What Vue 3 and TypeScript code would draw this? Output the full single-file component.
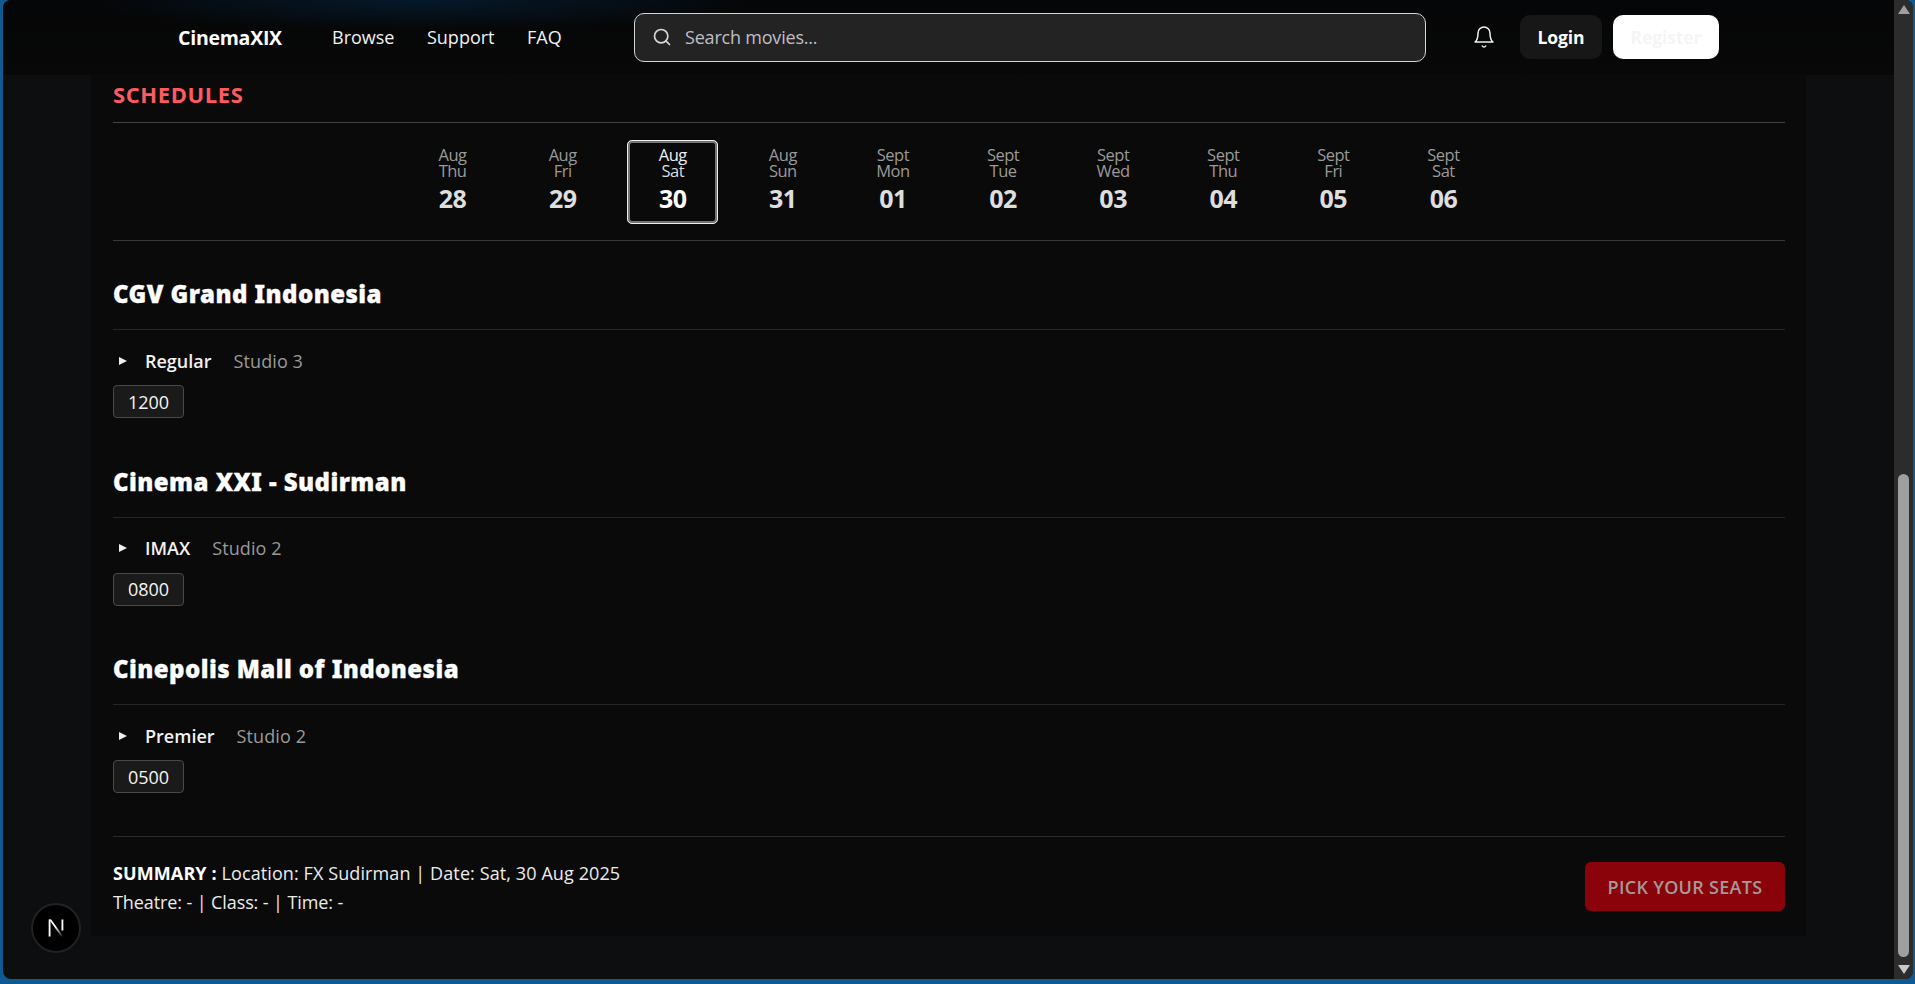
<script setup lang="ts">
interface Day { month: string; week: string; date: string; active?: boolean }
interface Theatre { name: string; cls: string; studio: string; time: string }
const days: Day[] = [
  { month: 'Aug', week: 'Thu', date: '28' },
  { month: 'Aug', week: 'Fri', date: '29' },
  { month: 'Aug', week: 'Sat', date: '30', active: true },
  { month: 'Aug', week: 'Sun', date: '31' },
  { month: 'Sept', week: 'Mon', date: '01' },
  { month: 'Sept', week: 'Tue', date: '02' },
  { month: 'Sept', week: 'Wed', date: '03' },
  { month: 'Sept', week: 'Thu', date: '04' },
  { month: 'Sept', week: 'Fri', date: '05' },
  { month: 'Sept', week: 'Sat', date: '06' },
]
const theatres: Theatre[] = [
  { name: 'CGV Grand Indonesia', cls: 'Regular', studio: 'Studio 3', time: '1200' },
  { name: 'Cinema XXI - Sudirman', cls: 'IMAX', studio: 'Studio 2', time: '0800' },
  { name: 'Cinepolis Mall of Indonesia', cls: 'Premier', studio: 'Studio 2', time: '0500' },
]
</script>

<template>
  <div class="frame">
    <div class="page">
      <header class="nav">
        <div class="brand">CinemaXIX</div>
        <nav class="links">
          <a>Browse</a><a>Support</a><a>FAQ</a>
        </nav>
        <label class="search">
          <svg width="20" height="20" viewBox="0 0 24 24" fill="none" stroke="#d8d8dc" stroke-width="2" stroke-linecap="round" stroke-linejoin="round"><circle cx="11" cy="11" r="8"/><path d="m21 21-4.3-4.3"/></svg>
          <span>Search movies...</span>
        </label>
        <svg class="bell" width="24" height="24" viewBox="0 0 24 24" fill="none" stroke="#f0f0f0" stroke-width="1.5" stroke-linecap="round" stroke-linejoin="round"><path d="M6 8a6 6 0 0 1 12 0c0 7 3 9 3 9H3s3-2 3-9"/><path d="M10.3 21a1.94 1.94 0 0 0 3.4 0"/></svg>
        <button class="login">Login</button>
        <button class="register">Register</button>
      </header>

      <main class="panel">
        <h2 class="title">SCHEDULES</h2>
        <div class="dates">
          <div v-for="d in days" :key="d.month + d.date" class="day" :class="{ active: d.active }">
            <span class="sm">{{ d.month }}</span>
            <span class="sm">{{ d.week }}</span>
            <strong>{{ d.date }}</strong>
          </div>
        </div>

        <section v-for="t in theatres" :key="t.name" class="theatre">
          <h3>{{ t.name }}</h3>
          <div class="row">
            <span class="tri"></span>
            <b>{{ t.cls }}</b>
            <span class="studio">{{ t.studio }}</span>
          </div>
          <button class="chip">{{ t.time }}</button>
        </section>

        <footer class="summary">
          <div class="sumtext">
            <div><b>SUMMARY :</b> Location: FX Sudirman | Date: Sat, 30 Aug 2025</div>
            <div class="line2">Theatre: - | Class: - | Time: -</div>
          </div>
          <button class="pick">PICK YOUR SEATS</button>
        </footer>
      </main>
    </div>

    <aside class="scrollbar">
      <span class="arrow up"></span>
      <div class="track"><div class="thumb"></div></div>
      <span class="arrow down"></span>
    </aside>

    <div class="devbadge">
      <svg width="22" height="22" viewBox="0 0 18 18"><defs><linearGradient id="ng" x1="0" y1="0" x2="1" y2="1"><stop offset="0.45" stop-color="#fff"/><stop offset="1" stop-color="#fff" stop-opacity="0"/></linearGradient></defs><path d="M3 2h1.5v14H3z" fill="#fff"/><path d="M3.4 2h1.7L15 16h-1.8z" fill="url(#ng)"/><path d="M13.5 2H15v9h-1.5z" fill="#fff"/></svg>
    </div>
  </div>
</template>

<style>
html, body { margin: 0; background: #0f5a90; overflow: hidden; }
</style>

<style scoped>
.frame {
  height: 979px;
  margin-left: 3px;
  margin-right: 2px;
  display: flex;
  position: relative;
  border-radius: 8px;
  overflow: hidden;
  background: #0d0e10;
  font-family: "Open Sans", "Noto Sans", sans-serif;
  color: #fff;
}
.page { flex: 1; min-width: 0; display: flex; flex-direction: column; }
.nav {
  height: 75px;
  flex: none;
  box-sizing: border-box;
  padding-bottom: 1px;
  display: flex;
  align-items: center;
  background:
    radial-gradient(ellipse 340px 30px at 420px 0, #05192a 0, rgba(5, 25, 42, 0) 100%),
    linear-gradient(180deg, #050607 0, #080808 100%);
  padding-left: 175px;
}
.brand { font-size: 19.5px; font-weight: 700; letter-spacing: -0.25px; width: 154px; }
.links { display: flex; gap: 32.5px; font-size: 18px; letter-spacing: 0; width: 302px; color: #f1f1f1; }
.search {
  width: 792px;
  height: 49px;
  box-sizing: border-box;
  border: 1px solid #d5d5d5;
  border-radius: 10px;
  background: #232323;
  display: flex;
  align-items: center;
  gap: 13px;
  padding-left: 17px;
  font-size: 18px;
  letter-spacing: -0.2px;
  color: #bfbfc4;
}
.bell { margin-left: 46px; }
.login, .register {
  height: 44px;
  border: 0;
  border-radius: 10px;
  font: inherit;
  font-weight: 700;
  font-size: 17.5px;
  letter-spacing: -0.1px;
}
.login { margin-left: 24px; width: 82px; background: #171717; color: #fff; }
.register { margin-left: 11px; width: 106px; background: #fff; color: #f5f5f5; }

.panel {
  width: 1715px;
  margin-left: 88px;
  box-sizing: border-box;
  height: 861px;
  background: #0a0a0a;
  padding: 0 21px 0 22px;
}
.title {
  margin: 0;
  height: 47px;
  line-height: 38px;
  font-size: 22px;
  font-weight: 700;
  letter-spacing: 0.6px;
  color: #ff5a5f;
  border-bottom: 1px solid #444;
}
.dates {
  height: 117px;
  padding-right: 2px;
  display: flex;
  justify-content: center;
  align-items: center;
  gap: 19.1px;
  border-bottom: 1px solid #3a3a3a;
}
.day {
  width: 91px;
  height: 84px;
  box-sizing: border-box;
  display: flex;
  flex-direction: column;
  align-items: center;
  padding-top: 7px;
  color: #9a9a9a;
  font-size: 16.5px;
  letter-spacing: -0.5px;
}
.sm { line-height: 16px; }
.day strong { font-size: 25px; line-height: 28px; margin-top: 5px; color: #dedede; }
.day.active {
  border: 3px solid #757575;
  outline: 1px solid #eee;
  outline-offset: -1px;
  border-radius: 5px;
  padding-top: 4px;
  color: #ddd;
}
.day.active .sm:first-child { color: #f0f0f0; }
.day.active strong { color: #fff; }

.theatre { height: 187.5px; }
h3 {
  margin: 0;
  height: 89px;
  box-sizing: border-box;
  padding-top: 34px;
  font-family: "Noto Sans", "Open Sans", sans-serif;
  font-size: 24px;
  line-height: 38px;
  font-weight: 900;
  letter-spacing: 0.45px;
  -webkit-text-stroke: 0.3px #fff;
  color: #fff;
  border-bottom: 1px solid #262626;
}
.row {
  height: 55px;
  box-sizing: border-box;
  padding-top: 6px;
  display: flex;
  align-items: center;
  font-size: 18px;
}
.tri {
  width: 0; height: 0;
  margin-left: 6px;
  border-left: 8px solid #f0f0f0;
  border-top: 4.5px solid transparent;
  border-bottom: 4.5px solid transparent;
}
.row b { margin-left: 18px; font-weight: 600; letter-spacing: 0; color: #f2f2f2; }
.studio { margin-left: 22px; color: #9a9a9a; letter-spacing: 0.1px; }
.chip {
  display: block;
  width: 71px;
  height: 33px;
  background: #1a1a1a;
  border: 1px solid #4a4a4a;
  border-radius: 4px;
  color: #f4f4f4;
  font: inherit;
  font-size: 18px;
  line-height: 1;
}
.summary {
  margin-top: 32.5px;
  border-top: 1px solid #2c2c2c;
  padding-top: 22px;
  display: flex;
  justify-content: space-between;
  align-items: flex-start;
  font-size: 18px;
  line-height: 29px;
  letter-spacing: 0.1px;
  color: #ececec;
}
.summary .line2 { letter-spacing: -0.1px; }
.summary b { font-weight: 700; color: #fff; }
.pick {
  width: 200px;
  height: 49px;
  margin-top: 3px;
  padding: 1px 0 0;
  border: 0;
  border-radius: 6px;
  background: #8b030a;
  color: #a39a9a;
  font: inherit;
  font-weight: 600;
  font-size: 18px;
  letter-spacing: 0.3px;
}

.scrollbar {
  width: 19px;
  flex: none;
  background: #2c2c2c;
  display: flex;
  flex-direction: column;
  align-items: center;
}
.track { flex: 1; width: 100%; padding-top: 460px; box-sizing: border-box; display: flex; justify-content: center; }
.thumb { width: 11px; height: 483px; background: #9f9f9f; border-radius: 6px; }
.arrow { width: 0; height: 0; border-left: 6px solid transparent; border-right: 6px solid transparent; flex: none; }
.up { border-bottom: 9px solid #9f9f9f; margin-top: 5px; }
.down { border-top: 9px solid #c8c8c8; margin: 5px 0 5px; }

.devbadge {
  position: absolute;
  left: 28px;
  top: 903px;
  width: 46px;
  height: 46px;
  border-radius: 50%;
  background: #000;
  border: 2px solid #222;
  display: flex;
  align-items: center;
  justify-content: center;
}
</style>
